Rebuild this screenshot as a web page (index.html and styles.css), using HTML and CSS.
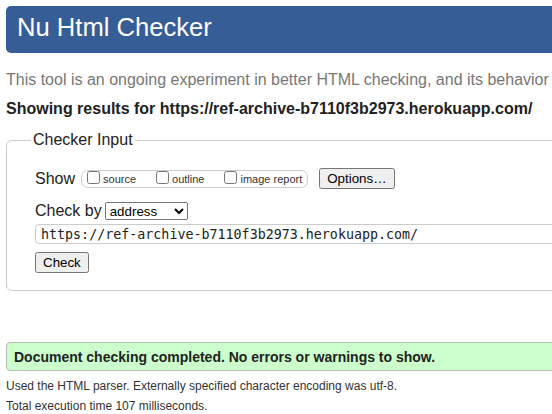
FILE: index.html
```html
<!DOCTYPE html>
<html lang="en">
<head>
<meta charset="utf-8">
<title>Nu Html Checker</title>
<link rel="stylesheet" href="styles.css">
</head>
<body>
<h1 class="title">Nu Html Checker</h1>
<p class="intro">This tool is an ongoing experiment in better HTML checking, and its behavior</p>
<p class="showing">Showing results for https://ref-archive-b7110f3b2973.herokuapp.com/</p>
<form class="checker">
  <fieldset class="panel">
    <legend class="panel-legend">Checker Input</legend>
    <div class="row row-show">
      <span class="row-label">Show</span>
      <span class="toggles">
        <label class="toggle"><input type="checkbox" class="toggle-box">source</label>
        <label class="toggle"><input type="checkbox" class="toggle-box">outline</label>
        <label class="toggle toggle-last"><input type="checkbox" class="toggle-box">image report</label>
      </span>
      <button type="button" class="btn btn-options">Options…</button>
    </div>
    <div class="row row-by">
      <span class="row-label">Check by</span>
      <select class="by-select">
        <option>address</option>
        <option>file upload</option>
        <option>text input</option>
      </select>
    </div>
    <div class="row row-url">
      <input type="text" class="url-input" value="https://ref-archive-b7110f3b2973.herokuapp.com/">
    </div>
    <div class="row row-submit">
      <button type="button" class="btn">Check</button>
    </div>
  </fieldset>
</form>
<p class="success">Document checking completed. No errors or warnings to show.</p>
<p class="meta">Used the HTML parser. Externally specified character encoding was utf-8.</p>
<p class="meta meta-next">Total execution time 107 milliseconds.</p>
</body>
</html>
```

FILE: styles.css
```css
html {
  overflow: hidden;
}

body {
  margin: 6px;
  min-width: 820px;
  font-family: "Liberation Sans", Arial, sans-serif;
  font-size: 16px;
  color: #222;
  background: #fff;
}

.title {
  margin: 0;
  padding: 0 11px 4px;
  height: 47px;
  box-sizing: border-box;
  line-height: 43px;
  font-size: 25.6px;
  font-weight: normal;
  color: #fff;
  background: #365d95;
  border-radius: 5px;
  white-space: nowrap;
}

.intro {
  margin: 18px 0 0;
  color: #777;
  white-space: nowrap;
}

.showing {
  margin: 11px 0 0;
  font-weight: bold;
  white-space: nowrap;
}

.checker {
  margin: 13px 0 0;
}

.panel {
  margin: 0;
  padding: 0 0 17px 24px;
  border: 1px solid #ccc;
  border-radius: 6px;
}

.panel-legend {
  padding: 0 2px;
}

.row {
  display: flex;
  align-items: center;
  margin-left: 4px;
}

.row-show {
  margin-top: 19px;
}

.row-by {
  margin-top: 13px;
}

.row-url {
  margin-top: 4px;
}

.row-submit {
  margin-top: 8px;
}

.row-label {
  white-space: nowrap;
}

.toggles {
  display: flex;
  align-items: center;
  height: 18px;
  box-sizing: border-box;
  margin-left: 6px;
  padding: 0 5px 0 1px;
  border: 1px solid #ccc;
  border-radius: 7px;
  font-size: 11px;
  color: #333;
}

.toggle {
  display: flex;
  align-items: center;
  margin-right: 16px;
  white-space: nowrap;
}

.toggle-last {
  margin-right: 0;
}

.toggle-box {
  width: 13px;
  height: 13px;
  margin: 0 3px 3px 4px;
}

.btn {
  font-family: "Liberation Sans", Arial, sans-serif;
  font-size: 13.333px;
}

.btn-options {
  margin-left: 11px;
}

.by-select {
  margin-left: 3px;
  height: 18px;
  font-family: "Liberation Sans", Arial, sans-serif;
  font-size: 13.333px;
}

.url-input {
  width: 740px;
  height: 20px;
  box-sizing: border-box;
  padding: 1px 5px;
  border: 1px solid #ccc;
  border-radius: 4px;
  font-family: "DejaVu Sans Mono", monospace;
  font-size: 13.333px;
  color: #222;
}

.success {
  margin: 51px 0 0;
  padding: 6px 7px 5px;
  border: 1px solid #bbb;
  border-radius: 4px;
  background: #ccffcc;
  font-size: 14px;
  font-weight: bold;
  white-space: nowrap;
}

.meta {
  margin: 8px 0 0;
  font-size: 12px;
  color: #333;
  white-space: nowrap;
}

.meta-next {
  margin-top: 6px;
}
```
